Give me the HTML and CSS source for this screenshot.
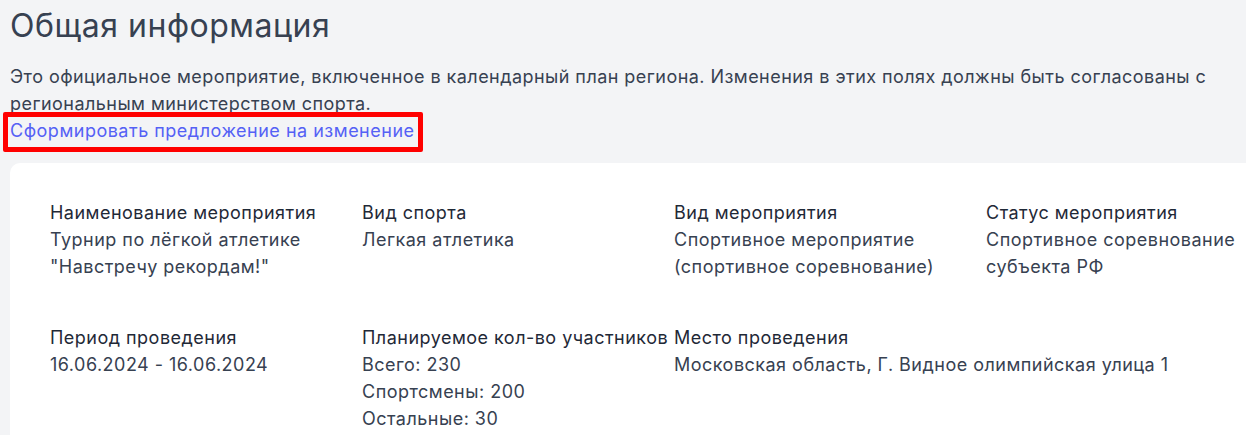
FILE: index.html
```html
<!DOCTYPE html>
<html lang="ru">
<head>
<meta charset="utf-8">
<title>Общая информация</title>
<link rel="stylesheet" href="styles.css">
</head>
<body>
<main class="page">
  <h1 class="title">Общая информация</h1>
  <p class="notice">Это официальное мероприятие, включенное в календарный план региона. Изменения в этих полях должны быть согласованы с региональным министерством спорта.</p>
  <a class="change-link" href="#">Сформировать предложение на изменение</a>
  <section class="card">
    <div class="grid">
      <div class="field">
        <div class="label">Наименование мероприятия</div>
        <div class="value">Турнир по лёгкой атлетике<br>"Навстречу рекордам!"</div>
      </div>
      <div class="field">
        <div class="label">Вид спорта</div>
        <div class="value">Легкая атлетика</div>
      </div>
      <div class="field">
        <div class="label">Вид мероприятия</div>
        <div class="value">Спортивное мероприятие<br>(спортивное соревнование)</div>
      </div>
      <div class="field">
        <div class="label">Статус мероприятия</div>
        <div class="value">Спортивное соревнование<br>субъекта РФ</div>
      </div>
      <div class="field">
        <div class="label">Период проведения</div>
        <div class="value">16.06.2024 - 16.06.2024</div>
      </div>
      <div class="field">
        <div class="label nowrap">Планируемое кол-во участников</div>
        <div class="value">Всего: 230<br>Спортсмены: 200<br>Остальные: 30</div>
      </div>
      <div class="field wide">
        <div class="label">Место проведения</div>
        <div class="value">Московская область, Г. Видное олимпийская улица 1</div>
      </div>
    </div>
  </section>
</main>
</body>
</html>
```

FILE: styles.css
```css
html, body {
  margin: 0;
  padding: 0;
  background: #f3f4f6;
  overflow: hidden;
}

body {
  font-family: Inter, "Noto Sans", sans-serif;
  color: #374151;
}

.page {
  padding: 8px 0 0 10px;
  width: 1400px;
}

.title {
  margin: 0 0 19px;
  font-size: 32px;
  line-height: 36px;
  letter-spacing: 0.5px;
  font-weight: 400;
  color: #374151;
}

.notice {
  margin: 0;
  width: 1224px;
  font-size: 18px;
  line-height: 27px;
  letter-spacing: 0.45px;
  color: #374151;
}

.change-link {
  position: relative;
  display: inline-block;
  font-size: 18px;
  line-height: 27px;
  letter-spacing: 0.5px;
  color: #5561f5;
  text-decoration: none;
}

.change-link::after {
  content: "";
  position: absolute;
  left: -7px;
  top: -5px;
  right: -8px;
  bottom: -8px;
  border: 5px solid #ff0000;
  border-radius: 2px;
}

.card {
  margin-top: 19px;
  background: #ffffff;
  border-radius: 10px;
  padding: 36px 40px 40px;
  width: 1300px;
}

.grid {
  display: grid;
  grid-template-columns: repeat(4, 312px);
  row-gap: 44px;
}

.field {
  font-size: 18px;
  line-height: 27px;
  letter-spacing: 0.48px;
}

.field.wide {
  grid-column: span 2;
}

.label {
  color: #1f2937;
}

.nowrap {
  white-space: nowrap;
}

.value {
  color: #374151;
}
```
